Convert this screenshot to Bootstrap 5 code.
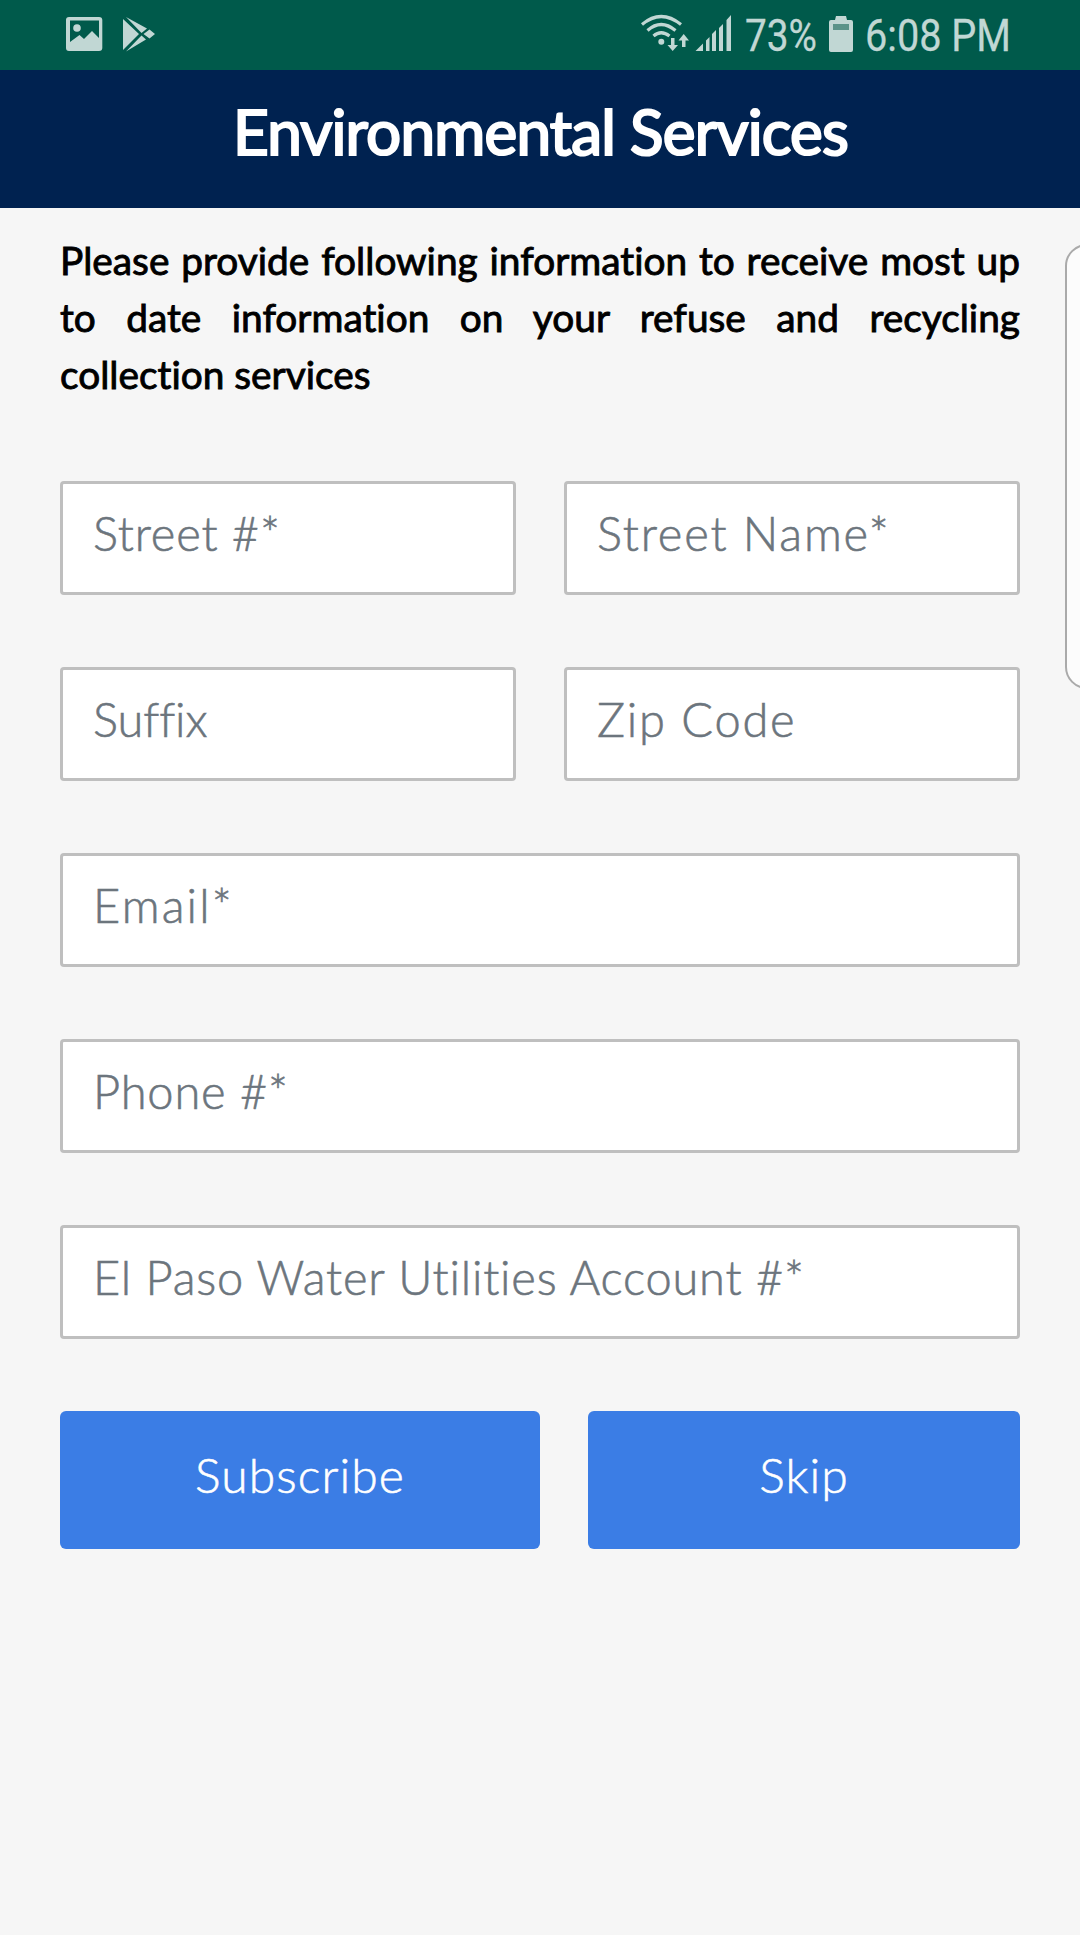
<!DOCTYPE html>
<html lang="en">
<head>
<meta charset="utf-8">
<meta name="viewport" content="width=device-width, initial-scale=1">
<title>Environmental Services</title>
<link href="https://cdn.jsdelivr.net/npm/bootstrap@5.3.0/dist/css/bootstrap.min.css" rel="stylesheet">
<style>
body{background:#f6f6f6;font-family:Lato,"Open Sans",sans-serif;min-height:1935px;overflow:hidden;font-variant-ligatures:none}
.status-bar{height:70px;background:#005a4b}
.status-bar svg{width:1080px;height:70px}
.title-bar{height:138px;background:#002250}
.title-bar h1{font-size:62px;font-weight:400;line-height:76px;padding:23px 0 0 1px;white-space:nowrap;letter-spacing:-.8px;-webkit-text-stroke:2.2px #fff}
.content-area{padding:24px 60px 0}
.intro{font-size:38.800px;line-height:57px;font-weight:400;color:#000;text-align:justify;margin-bottom:78px;-webkit-text-stroke:.9px #000}
.field-row{--bs-gutter-x:48px;margin-bottom:72px}
.entry{height:114px;border:3px solid #bfbfbf;border-radius:4px;font-size:47px;font-weight:300;padding:0 30px 10px;background:#fff;-webkit-text-stroke:.6px #6c757d}
.entry::placeholder{color:#6c757d;opacity:1}
.track-0{letter-spacing:-.1px}
.track-1{letter-spacing:.8px}
.track-3{letter-spacing:1.8px}
.track-4{letter-spacing:2.2px}
.action-btn{height:138px;border:0;border-radius:6px;background:#3b7de5;color:#fff;font-size:48px;font-weight:300;padding-bottom:16px;letter-spacing:1.1px;-webkit-text-stroke:.6px #fff}
.subscribe-btn{width:480px}
.edge-panel{top:244px;right:-30px;width:45px;height:445px;border:2px solid #aaa;border-radius:22px;background:#fcfcfc}
</style>
</head>
<body class="position-relative">
<div class="status-bar"><svg viewBox="0 0 1080 70" fill="#c1d7d4" class="d-block">
<path fill-rule="evenodd" d="M69 17H99Q102.300 17 102.300 20V48Q102.300 51 99 51H69Q66 51 66 48V20Q66 17 69 17ZM70 20.500V42L79.500 35L84 39L92 31L99 38V20.500Z"/><circle cx="77" cy="28" r="3.800"/>
<path d="M123 19L139 34L123 50ZM126 17L147 28.500L141.500 33ZM149.500 29.500L155 34L149.500 38.500L143.500 34ZM126 51.500L141.500 35.500L146 39.500Z"/>
<g fill="none" stroke="#c1d7d4" stroke-width="3.200"><path d="M642 24.500Q661 8.500 681 24.500M647.500 30.500Q661 18.500 675.500 30.500M653.500 36Q661 29.500 669.500 36"/></g>
<circle cx="661.300" cy="41.700" r="3"/>
<path d="M671 38H674.500V45H678L672.700 51L667.500 45H671ZM682 47H685.500V40.500H689L683.700 34L678.500 40.500H682Z"/>
<path d="M695.500 51L703 43.500V51ZM706 40.500L709.500 37V51H706ZM712 34L716 30V51H712ZM719 28L723 24V51H719ZM726.500 20L731 15V51H726.500Z"/>
<text x="745" y="51" font-family="Roboto" font-size="45" textLength="72" lengthAdjust="spacingAndGlyphs" stroke="#c1d7d4" stroke-width=".3">73%</text>
<path d="M836 16H846L847 20H851Q853 20 853 22V50Q853 52 851 52H831Q829 52 829 50V22Q829 20 831 20H835Z"/><path d="M833 24H849V30H833Z" fill="#5b9389"/>
<text x="865" y="51" font-family="Roboto" font-size="45" textLength="146" lengthAdjust="spacingAndGlyphs" stroke="#c1d7d4" stroke-width=".3">6:08 PM</text>
</svg></div>
<header class="title-bar text-white text-center"><h1 class="m-0">Environmental Services</h1></header>
<main class="content-area">
<p class="intro">Please provide following information to receive most up to date information on your refuse and recycling collection services</p>
<form>
<div class="row field-row"><div class="col-6"><input class="form-control entry track-1" placeholder="Street #*"></div><div class="col-6"><input class="form-control entry track-3" placeholder="Street Name*"></div></div>
<div class="row field-row"><div class="col-6"><input class="form-control entry track-0" placeholder="Suffix"></div><div class="col-6"><input class="form-control entry track-3" placeholder="Zip Code"></div></div>
<div class="row field-row"><div class="col-12"><input class="form-control entry track-4" placeholder="Email*"></div></div>
<div class="row field-row"><div class="col-12"><input class="form-control entry track-1" placeholder="Phone #*"></div></div>
<div class="row field-row"><div class="col-12"><input class="form-control entry track-1" placeholder="El Paso Water Utilities Account #*"></div></div>
<div class="d-flex gap-5"><button type="button" class="btn action-btn subscribe-btn">Subscribe</button><button type="button" class="btn action-btn flex-fill">Skip</button></div>
</form>
</main>
<div class="edge-panel position-absolute"></div>
<script src="https://cdn.jsdelivr.net/npm/bootstrap@5.3.0/dist/js/bootstrap.bundle.min.js"></script>
</body>
</html>
